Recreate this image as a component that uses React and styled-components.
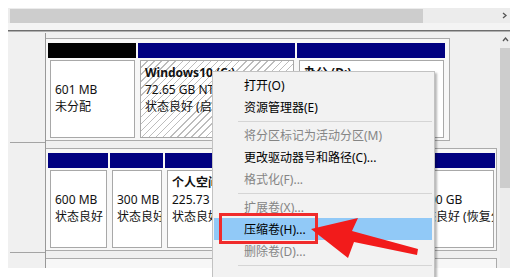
import React from "react";
import styled, { createGlobalStyle } from "styled-components";

const GlobalStyle = createGlobalStyle`
  html, body {
    margin: 0;
    padding: 0;
    background: #fff;
    overflow: hidden;
  }
  body {
    font-family: "Noto Sans", "Noto Sans CJK SC", sans-serif;
  }
`;

const Screen = styled.div`
  position: relative;
  width: 523px;
  height: 277px;
  box-sizing: border-box;
  padding: 8px 13px 9px 8px;
  overflow: hidden;
  background: #fff;
`;

const Panel = styled.div`
  height: 100%;
  display: flex;
  flex-direction: column;
  background: #f0f0f0;
  overflow: hidden;
`;

// list view scrollbar above the splitter
const HScroll = styled.div`
  height: 15px;
  flex-shrink: 0;
  display: flex;
  background: #ececec;
  padding-left: 2px;
`;

const HThumb = styled.div`
  width: 413px;
  margin-top: 1px;
  background: #cdcdcd;
`;

const Spacer = styled.div`
  flex: 1;
`;

const ArrowBtn = styled.div`
  width: ${(p) => p.$w || 12}px;
  height: ${(p) => p.$h || 15}px;
  flex-shrink: 0;
  display: flex;
  align-items: center;
  justify-content: center;
`;

const ListTail = styled.div`
  height: 7px;
  flex-shrink: 0;
  background: #f4f4f4;
`;

const Splitter = styled.div`
  height: 0;
  flex-shrink: 0;
  border-top: 1px solid #6e6e6e;
  border-bottom: 1px solid #b0b0b0;
`;

const Graph = styled.div`
  flex: 1;
  min-height: 0;
  display: flex;
`;

const Disks = styled.div`
  flex: 1;
  display: flex;
  flex-direction: column;
  padding-top: 1px;
`;

const Row = styled.div`
  display: flex;
  flex-shrink: 0;
`;

const Label = styled.div`
  width: 38px;
  box-sizing: border-box;
  border-right: 1px solid #989898;
  background: ${(p) =>
    p.$open
      ? "none"
      : "linear-gradient(#a4a4a4, #a4a4a4) no-repeat 2px 100% / calc(100% - 2px) 1px"};
`;

const RowBody = styled.div`
  flex: 1;
  padding: 5px 0 2px;
`;

const DiskBox = styled.div`
  width: ${(p) => p.$w}px;
  height: 103px;
  box-sizing: border-box;
  border: 1px solid #ababab;
  border-left: none;
  background: #f7f7f7;
  padding: 4px 3px 2px 2px;
  display: flex;
  gap: 2px;
`;

const Column = styled.div`
  width: ${(p) => p.$w}px;
  flex-shrink: 0;
  display: flex;
  flex-direction: column;
`;

const Bar = styled.div`
  height: 15px;
  background: ${(p) => p.$c};
`;

const Part = styled.div`
  flex: 1;
  margin: 2px 1px 0 2px;
  border: 1px solid #a8a8a8;
  padding: 3px 4px;
  background: ${(p) =>
    p.$hatch
      ? "repeating-linear-gradient(135deg, #ffffff 0 4px, #bdbdbd 4px 5px)"
      : "#fff"};
  font-size: 12px;
  line-height: 17px;
  color: #111;
  white-space: nowrap;
  overflow: hidden;
`;

const Line = styled.div`
  height: 17px;
  font-weight: ${(p) => (p.$bold ? 700 : 400)};
`;

const VScroll = styled.div`
  width: 10px;
  flex-shrink: 0;
  display: flex;
  flex-direction: column;
  background: #ececec;
`;

const VThumb = styled.div`
  height: 140px;
  margin-top: 1px;
  background: #cdcdcd;
`;

const Menu = styled.div`
  position: absolute;
  left: 212px;
  top: 71px;
  width: 223px;
  height: 230px;
  box-sizing: border-box;
  padding: 2px 2px 0 1px;
  background: #f2f2f2;
  border: 1px solid #c2c2c2;
  box-shadow: 2px 2px 2px rgba(0, 0, 0, 0.28);
  font-size: 12px;
`;

const Item = styled.div`
  height: 22px;
  display: flex;
  align-items: center;
  padding-left: 30px;
  color: ${(p) => (p.$off ? "#858585" : "#000")};
  background: ${(p) => (p.$hot ? "#91c9f7" : "transparent")};
  white-space: nowrap;
`;

const Sep = styled.div`
  height: 1px;
  margin: 3px 0 2px 24px;
  background: #d5d5d5;
`;

const Mark = styled.div`
  position: absolute;
  left: 219px;
  top: 213px;
  width: 99px;
  height: 31px;
  box-sizing: border-box;
  border: 3px solid #f02b2b;
`;

const Pointer = styled.svg`
  position: absolute;
  left: 305px;
  top: 212px;
`;

const Chevron = ({ up }) => (
  <svg width="7" height="7" viewBox="0 0 7 7">
    <path
      d={up ? "M1 5 L3.5 2 L6 5" : "M2 1 L5 3.5 L2 6"}
      fill="none"
      stroke="#555"
      strokeWidth="1.3"
    />
  </svg>
);

const disk1 = [
  { w: 88, bar: "#000", lines: ["", "601 MB", "未分配"] },
  {
    w: 157,
    bar: "#000080",
    hatch: true,
    lines: ["Windows10  (C:)", "72.65 GB NTFS", "状态良好 (启动, 页面文件, 故障转储, 基本数据分区)"],
  },
  { w: 148, bar: "#000080", lines: ["办公  (D:)", "80.00 GB NTFS", "状态良好 (基本数据分区)"] },
];

const disk2 = [
  { w: 60, bar: "#000080", lines: ["", "600 MB", "状态良好 (EFI 系统分区)"] },
  { w: 53, bar: "#000080", lines: ["", "300 MB", "状态良好 (OEM 分区)"] },
  { w: 238, bar: "#000080", lines: ["个人空间  (E:)", "225.73 GB NTFS", "状态良好 (基本数据分区)"] },
  { w: 90, bar: "#000080", lines: ["", "10.00 GB", "状态良好 (恢复分区)"] },
];

const menu = [
  { t: "打开(O)" },
  { t: "资源管理器(E)" },
  { sep: true },
  { t: "将分区标记为活动分区(M)", off: true },
  { t: "更改驱动器号和路径(C)..." },
  { t: "格式化(F)...", off: true },
  { sep: true },
  { t: "扩展卷(X)...", off: true },
  { t: "压缩卷(H)...", hot: true },
  { t: "删除卷(D)...", off: true },
  { sep: true },
];

function Disk({ width, parts }) {
  return (
    <DiskBox $w={width}>
      {parts.map((p, i) => (
        <Column key={i} $w={p.w}>
          <Bar $c={p.bar} />
          <Part $hatch={p.hatch}>
            {p.lines.map((l, j) => (
              <Line key={j} $bold={j === 0}>
                {l}
              </Line>
            ))}
          </Part>
        </Column>
      ))}
    </DiskBox>
  );
}

export default function App() {
  return (
    <>
      <GlobalStyle />
      <Screen>
        <Panel>
          <HScroll>
            <HThumb />
            <Spacer />
            <ArrowBtn>
              <Chevron />
            </ArrowBtn>
          </HScroll>
          <ListTail />
          <Splitter />
          <Graph>
            <Disks>
              <Row>
                <Label />
                <RowBody>
                  <Disk width={404} parts={disk1} />
                </RowBody>
              </Row>
              <Row>
                <Label />
                <RowBody>
                  <Disk width={451} parts={disk2} />
                </RowBody>
              </Row>
              <Row>
                <Label $open />
                <RowBody>
                  <DiskBox $w={451} />
                </RowBody>
              </Row>
            </Disks>
            <VScroll>
              <ArrowBtn $w={10} $h={15}>
                <Chevron up />
              </ArrowBtn>
              <VThumb />
            </VScroll>
          </Graph>
        </Panel>

        <Menu>
          {menu.map((m, i) =>
            m.sep ? (
              <Sep key={i} />
            ) : (
              <Item key={i} $off={m.off} $hot={m.hot}>
                {m.t}
              </Item>
            )
          )}
        </Menu>

        <Mark />
        <Pointer width="120" height="50" viewBox="0 0 120 50">
          <polygon
            points="6,17 53,6 47,19 113,37 112,43 49,30 43,46"
            fill="#f21b1b"
          />
        </Pointer>
      </Screen>
    </>
  );
}
